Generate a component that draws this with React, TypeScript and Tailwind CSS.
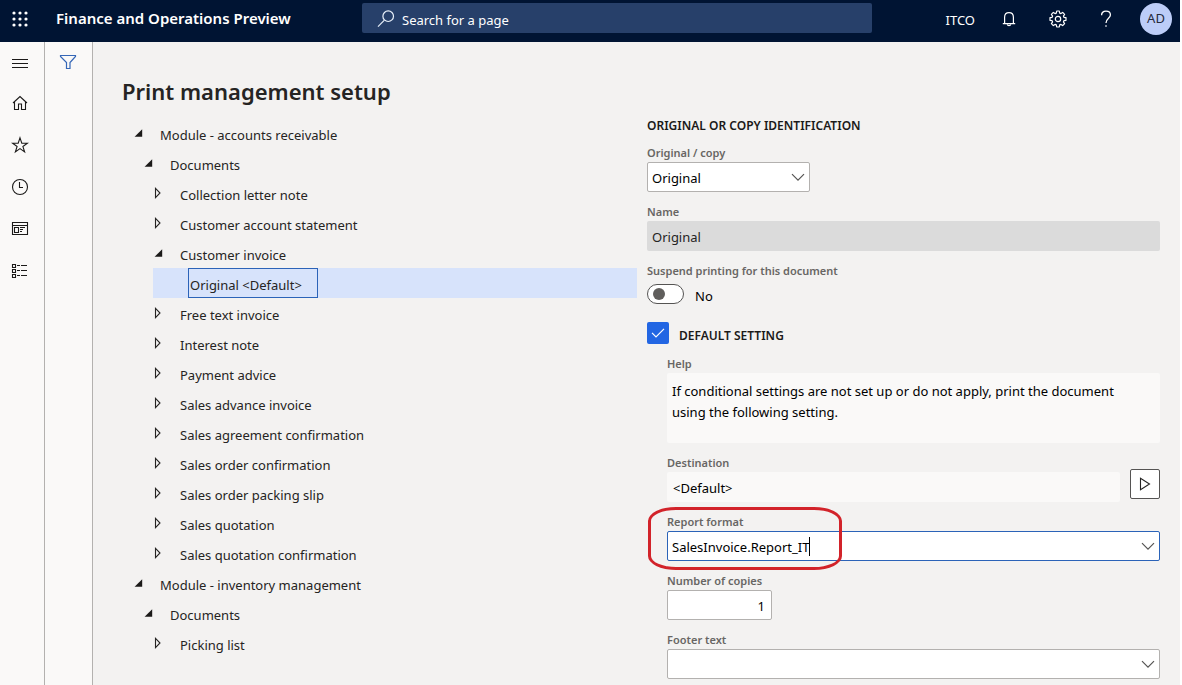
import type { ReactNode } from "react";

type Node = { label: string; level: 0 | 1 | 2; open?: boolean };

const receivable: Node[] = [
  { label: "Module - accounts receivable", level: 0, open: true },
  { label: "Documents", level: 1, open: true },
  { label: "Collection letter note", level: 2 },
  { label: "Customer account statement", level: 2 },
  { label: "Customer invoice", level: 2, open: true },
];

const remaining: Node[] = [
  { label: "Free text invoice", level: 2 },
  { label: "Interest note", level: 2 },
  { label: "Payment advice", level: 2 },
  { label: "Sales advance invoice", level: 2 },
  { label: "Sales agreement confirmation", level: 2 },
  { label: "Sales order confirmation", level: 2 },
  { label: "Sales order packing slip", level: 2 },
  { label: "Sales quotation", level: 2 },
  { label: "Sales quotation confirmation", level: 2 },
  { label: "Module - inventory management", level: 0, open: true },
  { label: "Documents", level: 1, open: true },
  { label: "Picking list", level: 2 },
];

const indent = ["pl-[12px]", "pl-[22px]", "pl-[32px]"];

function TreeRow({ node }: { node: Node }) {
  return (
    <li role="treeitem" aria-expanded={!!node.open} aria-level={node.level + 1} className={indent[node.level]}>
      <button type="button" className="flex h-[30px] items-center text-left">
        <svg width="10" height="12" viewBox="0 0 10 12" className="mr-4 shrink-0" aria-hidden="true">
          {node.open ? (
            <path d="M8.2 2.2V9.8H0.6Z" fill="#1b1a19" />
          ) : (
            <path d="M1.5 1.4V10.6L6 6Z" fill="none" stroke="#252423" strokeWidth="1.1" />
          )}
        </svg>
        <span className="pt-[5px]">{node.label}</span>
      </button>
    </li>
  );
}

function RailButton({ label, children }: { label: string; children: ReactNode }) {
  return (
    <button type="button" aria-label={label} className="flex h-[42px] items-center justify-center">
      <svg width="18" height="18" viewBox="0 0 18 18" fill="none" stroke="#1b1a19" strokeWidth="1.1">
        {children}
      </svg>
    </button>
  );
}

function Label({ id, children }: { id: string; children: ReactNode }) {
  return (
    <label htmlFor={id} className="block h-[20px] text-[11px] leading-[22px] font-semibold text-[#686664]">
      {children}
    </label>
  );
}

function Chevron() {
  return (
    <svg width="14" height="10" viewBox="0 0 14 10" fill="none" stroke="#555453" strokeWidth="1.2" className="shrink-0" aria-hidden="true">
      <path d="M1 2.2L7 8.2L13 2.2" />
    </svg>
  );
}

function Header() {
  return (
    <header className="flex h-[42px] items-start bg-[#001433] text-white">
      <div className="flex h-[37px] w-[362px] shrink-0 items-center">
        <button type="button" aria-label="App launcher" className="ml-[12px] mr-[28px]">
          <svg width="16" height="16" viewBox="0 0 16 16" fill="#fff">
            {[2, 8, 14].map((y) =>
              [2, 8, 14].map((x) => <circle key={`${x}-${y}`} cx={x} cy={y} r="1.6" />)
            )}
          </svg>
        </button>
        <span className="text-[15px] font-semibold">Finance and Operations Preview</span>
      </div>
      <label className="mt-[3px] flex h-[30px] max-w-[510px] flex-1 items-center rounded-[2px] bg-[#27406a] pl-[15px]">
        <svg width="18" height="20" viewBox="0 0 18 20" fill="none" stroke="#e8f0fa" strokeWidth="1.2" aria-hidden="true">
          <circle cx="11.2" cy="8.2" r="5.3" />
          <path d="M7.4 12.2L1 18.6" />
        </svg>
        <input
          aria-label="Search for a page"
          placeholder="Search for a page"
          className="ml-[7px] min-w-0 flex-1 bg-transparent pt-[5px] text-[13px] text-white outline-none placeholder:text-white"
        />
      </label>
      <div className="ml-auto flex h-[37px] shrink-0 items-center">
        <span className="pt-[3px] pr-[9px] text-[13px]">ITCO</span>
        <button type="button" aria-label="Notifications" className="flex w-[49px] justify-center">
          <svg width="16" height="16" viewBox="0 0 16 16" fill="none" stroke="#fff" strokeWidth="1.2">
            <path d="M3.6 12.4V6.2C3.6 3.4 5.4 1.6 8 1.6S12.4 3.4 12.4 6.2V12.4M1.8 12.6H14.2" />
            <path d="M6.2 13.4C6.6 15 9.4 15 9.8 13.4" />
          </svg>
        </button>
        <button type="button" aria-label="Settings" className="flex w-[49px] justify-center">
          <svg width="18" height="18" viewBox="0 0 18 18" fill="none" stroke="#fff" strokeWidth="1.2" strokeLinejoin="round">
            <path d="M7.7 1H10.3L10.7 3.1L11.9 3.6L13.7 2.4L15.6 4.3L14.4 6.1L14.9 7.3L17 7.7V10.3L14.9 10.7L14.4 11.9L15.6 13.7L13.7 15.6L11.9 14.4L10.7 14.9L10.3 17H7.7L7.3 14.9L6.1 14.4L4.3 15.6L2.4 13.7L3.6 11.9L3.1 10.7L1 10.3V7.7L3.1 7.3L3.6 6.1L2.4 4.3L4.3 2.4L6.1 3.6L7.3 3.1Z" />
            <circle cx="9" cy="9" r="2.7" />
          </svg>
        </button>
        <button type="button" aria-label="Help" className="flex w-[48px] justify-center">
          <svg width="12" height="18" viewBox="0 0 12 18" fill="none" stroke="#fff" strokeWidth="1.3">
            <path d="M1.6 5.2C1.6 2.6 3.4 1.2 6 1.2S10.4 2.6 10.4 5C10.4 8.2 6 8.4 6 13" />
            <path d="M6 15.2V16.8" />
          </svg>
        </button>
        <button type="button" aria-label="Account AD" className="mr-2 ml-[10px] flex size-8 items-center justify-center rounded-full bg-[#bccdf8] text-[13px] text-[#252a3c]">
          AD
        </button>
      </div>
    </header>
  );
}

export default function App() {
  return (
    <div className="min-h-screen bg-white pr-[2px] font-['Noto_Sans','Open_Sans',sans-serif] text-[13px] leading-[21px] text-[#252423]">
      <Header />
      <div className="flex min-h-[643px] bg-[#f3f2f1]">
        <nav aria-label="Main" className="flex w-[45px] shrink-0 flex-col border-r border-[#b3b1af] bg-[#faf9f8] pr-[4px]">
          <button type="button" aria-label="Expand navigation" className="flex h-[40px] items-center justify-center">
            <svg width="16" height="16" viewBox="0 0 16 16" stroke="#1b1a19">
              <path d="M0 5.5H16M0 9.5H16M0 13.5H16" />
            </svg>
          </button>
          <RailButton label="Home">
            <path d="M2 9L9 2.5L16 9M3.5 8V15.5H7.5V10H10.5V15.5H14.5V8" />
          </RailButton>
          <RailButton label="Favorites">
            <path d="M9 1.8L10.8 7.2H16.4L11.9 10.5L13.6 15.9L9 12.6L4.4 15.9L6.1 10.5L1.6 7.2H7.2Z" />
          </RailButton>
          <RailButton label="Recent">
            <circle cx="9" cy="9" r="7.5" />
            <path d="M8.5 4V9.5H12" />
          </RailButton>
          <RailButton label="Workspaces">
            <path d="M1.5 2.5H16.5V14.5H1.5ZM1.5 5.5H16.5M3.5 7.5H7.5V12.5H3.5ZM9 7.5H14M9 9.5H12M9 11.5H11" />
          </RailButton>
          <RailButton label="Modules">
            <path d="M1.5 2.5H4.5V5.5H1.5ZM1.5 7.5H4.5V10.5H1.5ZM1.5 12.5H4.5V15.5H1.5ZM6 3.5H9M10 3.5H16M6 8.5H9M10 8.5H16M6 13.5H9M10 13.5H16" />
          </RailButton>
        </nav>
        <aside className="flex w-[48px] shrink-0 justify-center border-r border-[#b3b1af] bg-[#faf9f8] pr-[2px]">
          <button type="button" aria-label="Filter" className="h-[40px]">
            <svg width="18" height="16" viewBox="0 0 18 16" fill="none" stroke="#3567b7" strokeWidth="1.2">
              <path d="M1.5 1.5H16.5V2.5L11 8.5V14.5H7.5V8.5L1.5 2.5Z" />
            </svg>
          </button>
        </aside>

        <main className="grid min-w-0 flex-1 grid-cols-[515fr_513fr] gap-[10px] pr-[20px] pl-[29px]">
          <section>
            <h1 className="pt-[33px] pb-[11px] text-[22px] leading-[32px] font-semibold">Print management setup</h1>
            <ul role="tree" aria-label="Documents">
              {receivable.map((n) => (
                <TreeRow key={n.label} node={n} />
              ))}
              <li role="treeitem" aria-level={4} aria-selected="true" className="ml-[31px] bg-[#d7e3fb] pl-[35px]">
                <button type="button" className="flex h-[30px] w-[130px] items-center border border-[#2b63b8] pt-[5px] pl-px">
                  Original &lt;Default&gt;
                </button>
              </li>
              {remaining.map((n) => (
                <TreeRow key={n.label} node={n} />
              ))}
            </ul>
          </section>

          <form className="pt-[73px]">
            <h2 className="mb-[6px] text-[12px] leading-[21px] font-semibold text-[#1b1a19]">ORIGINAL OR COPY IDENTIFICATION</h2>

            <Label id="kind">Original / copy</Label>
            <div className="mb-[9px] grid h-[30px] w-[163px] items-center rounded-[2px] border border-[#b3b1af] bg-white">
              <select id="kind" className="col-start-1 row-start-1 h-[28px] appearance-none pt-[3px] pl-[4px] text-black outline-none">
                <option>Original</option>
              </select>
              <span className="pointer-events-none col-start-1 row-start-1 mr-[4px] justify-self-end">
                <Chevron />
              </span>
            </div>

            <Label id="name">Name</Label>
            <input id="name" readOnly value="Original" className="mb-[9px] block h-[30px] w-full rounded-[2px] bg-[#dbdbdb] pt-[2px] pl-[5px] outline-none" />

            <Label id="suspend">Suspend printing for this document</Label>
            <div className="mb-[14px] flex h-[28px] items-center">
              <input
                id="suspend"
                type="checkbox"
                role="switch"
                className="mr-[11px] flex h-[20px] w-[37px] appearance-none items-center rounded-full border border-[#555453] bg-white pl-[5px] before:size-[12px] before:rounded-full before:bg-[#605e5c]"
              />
              <span className="pt-[5px] text-black">No</span>
            </div>

            <div className="mb-[9px] flex h-[22px] items-center">
              <span className="mr-[10px] grid size-[22px] place-items-center">
                <input id="default" type="checkbox" defaultChecked className="col-start-1 row-start-1 size-[22px] appearance-none rounded-[2px] bg-[#2266e3]" />
                <svg width="14" height="10" viewBox="0 0 14 10" fill="none" stroke="#fff" strokeWidth="1.2" className="pointer-events-none relative col-start-1 row-start-1" aria-hidden="true">
                  <path d="M1 4.8L5 8.8L13 0.8" />
                </svg>
              </span>
              <label htmlFor="default" className="pt-[5px] text-[12px] font-semibold text-[#1b1a19]">
                DEFAULT SETTING
              </label>
            </div>

            <div className="pl-[20px]">
              <Label id="help">Help</Label>
              <textarea
                id="help"
                readOnly
                className="mb-[9px] block h-[70px] w-full resize-none rounded-[2px] bg-[#faf9f8] pt-[8px] pr-[20px] pl-[5px] text-black outline-none"
                value="If conditional settings are not set up or do not apply, print the document using the following setting."
              />

              <Label id="destination">Destination</Label>
              <div className="mb-[9px] flex h-[30px] items-start gap-[10px]">
                <input id="destination" readOnly value="<Default>" className="h-[30px] min-w-0 flex-1 rounded-[2px] bg-[#faf9f8] pt-[2px] pl-[6px] text-black outline-none" />
                <button type="button" aria-label="Choose destination" className="-mt-[3px] flex size-[30px] items-center justify-center rounded-[2px] border border-[#555453] bg-white">
                  <svg width="12" height="14" viewBox="0 0 12 14" fill="none" stroke="#252423" strokeWidth="1.1" aria-hidden="true">
                    <path d="M1.5 1.2V12.8L10.5 7Z" />
                  </svg>
                </button>
              </div>

              <div className="relative mb-[9px]">
                <Label id="format">Report format</Label>
                <div className="flex h-[30px] items-center rounded-[2px] border border-[#2b63b8] bg-white px-[4px]">
                  <input id="format" role="combobox" aria-expanded="false" defaultValue="SalesInvoice.Report_IT" className="field-sizing-content pt-[3px] text-black outline-none" />
                  <span className="h-[19px] w-px bg-black" />
                  <span className="ml-auto">
                    <Chevron />
                  </span>
                </div>
                <span className="pointer-events-none absolute -top-[4px] -left-[19px] h-[63px] w-[194px] rounded-[28px/14px] border-[3px] border-[#d2232a]" />
              </div>

              <Label id="copies">Number of copies</Label>
              <input id="copies" defaultValue="1" className="mb-[9px] block h-[30px] w-[105px] rounded-[2px] border border-[#b3b1af] bg-white pt-[2px] pr-[6px] text-right text-black outline-none" />

              <Label id="footer">Footer text</Label>
              <div className="flex h-[30px] items-center rounded-[2px] border border-[#b3b1af] bg-white px-[4px]">
                <input id="footer" role="combobox" aria-expanded="false" className="min-w-0 flex-1 outline-none" />
                <Chevron />
              </div>
            </div>
          </form>
        </main>
      </div>
    </div>
  );
}
